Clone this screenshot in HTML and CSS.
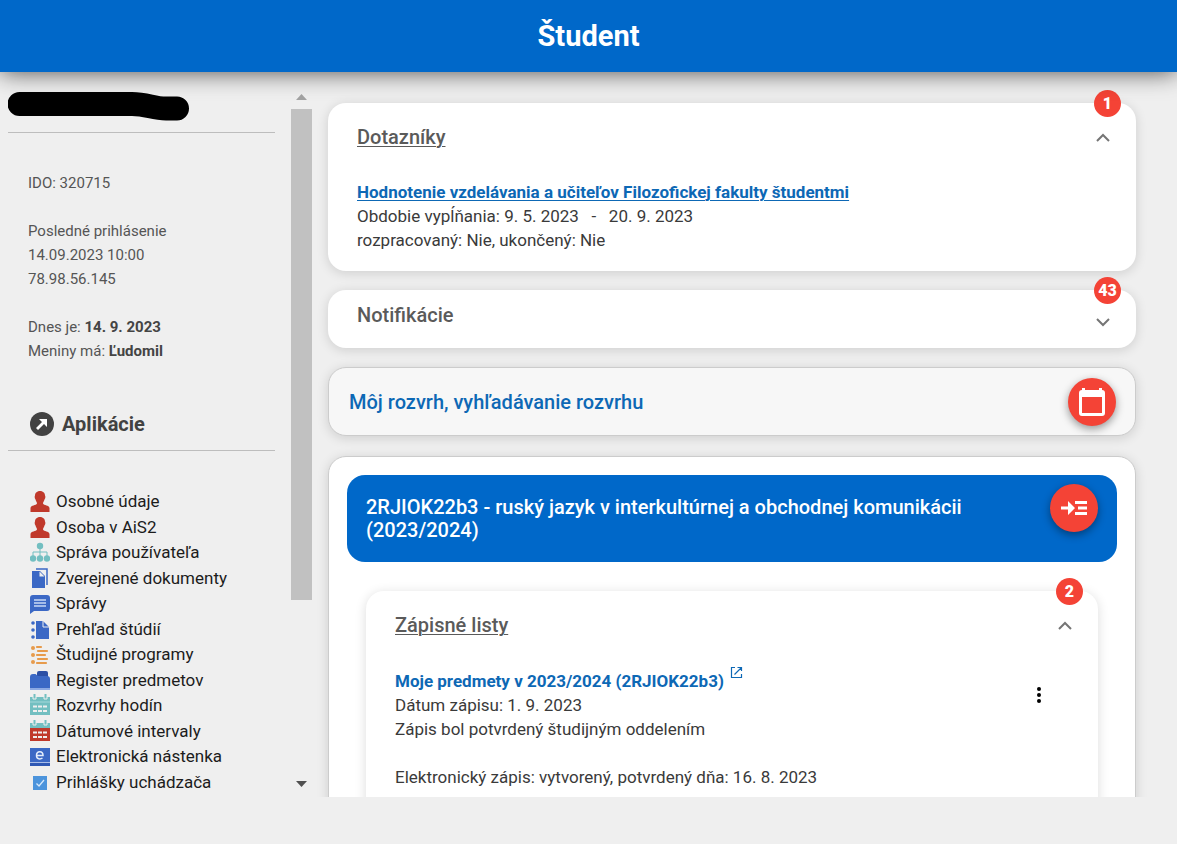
FILE: index.html
```html
<!DOCTYPE html>
<html lang="sk">
<head>
<meta charset="utf-8">
<meta name="viewport" content="width=device-width, initial-scale=1">
<title>Študent</title>
<link rel="stylesheet" href="styles.css">
</head>
<body class="page">
<header class="topbar"><h1 class="topbar-title">Študent</h1></header>
<div class="layout">
  <aside class="sidebar">
    <div class="sidebar-content">
      <div class="user">
        <svg class="user-mask" viewBox="0 0 184 32" aria-hidden="true"><path d="M11.500 13H124C139 13 145 17.500 158 17.500H169" fill="none" stroke="#000" stroke-width="24" stroke-linecap="round"/></svg>
      </div>
      <div class="info">
        <p>IDO: 320715</p>
        <p>Posledné prihlásenie<br>14.09.2023 10:00<br>78.98.56.145</p>
        <p>Dnes je: <strong>14. 9. 2023</strong><br>Meniny má: <strong>Ľudomil</strong></p>
      </div>
      <h2 class="apps-title">
        <svg class="apps-icon" viewBox="0 0 24 24" aria-hidden="true"><circle cx="12" cy="12" r="12" fill="#424242"/><path d="M9 7h8v8l-3-3-6 6-2-2 6-6z" fill="#fff"/></svg>
        Aplikácie
      </h2>
      <nav class="apps" aria-label="Aplikácie">
        <a class="app" href="#"><svg class="app-icon" viewBox="0 0 20 22"><path id="person" d="M5 5.500C5-.5 15-.5 15 5.500q1 2-.5 4c-.5 2-1.500 2.500-1.500 4 1 2 6 1.500 6.500 4.500v4H.5v-4C1 15 6 15.500 7 13.500c0-1.500-1-2-1.500-4-1.500-2-.5-4-.5-4z" fill="#c0392b"/></svg>Osobné údaje</a>
        <a class="app" href="#"><svg class="app-icon" viewBox="0 0 20 22"><use href="#person"/></svg>Osoba v AiS2</a>
        <a class="app" href="#"><svg class="app-icon" viewBox="0 0 20 22"><path d="M3 15V11H17v4M10 7v8" fill="none" stroke="#73bfc1"/><g fill="#73bfc1"><circle cx="10" cy="5" r="3.200"/><circle cx="3" cy="17.500" r="3.200"/><circle cx="10" cy="17.500" r="3.200"/><circle cx="17" cy="17.500" r="3.200"/></g></svg>Správa používateľa</a>
        <a class="app" href="#"><svg class="app-icon" viewBox="0 0 20 22"><path d="M6 2h11v16" fill="none" stroke="#3b68c5" stroke-width="1.500"/><path d="M2 4h8l5 5v12H2z" fill="#3b68c5"/><path d="M9.500 4.500v5h5z" fill="#eee"/></svg>Zverejnené dokumenty</a>
        <a class="app" href="#"><svg class="app-icon" viewBox="0 0 20 22"><path d="M3 3h14q3 0 3 3v10q0 3-3 3H4l-4 3V6q0-3 3-3z" fill="#3b68c5"/><path d="M4 8h12M4 11h12M4 14h12" stroke="#c9d9f5" stroke-width="1.600"/></svg>Správy</a>
        <a class="app" href="#"><svg class="app-icon" viewBox="0 0 20 22"><path d="M6 3h7l6 6v12H6z" fill="#3b68c5"/><path d="M13 3v6h6" fill="none" stroke="#efefef"/><g fill="#3b68c5"><circle cx="3" cy="5" r="1.800"/><circle cx="3" cy="12" r="1.800"/><circle cx="3" cy="19" r="1.800"/></g></svg>Prehľad štúdií</a>
        <a class="app" href="#"><svg class="app-icon" viewBox="0 0 20 22"><path d="M7 4h4M8 8h9M7 12h8M8 16h9M7 20h9" stroke="#e79b4c" stroke-width="2.200" stroke-linecap="round"/><g fill="#e79b4c"><circle cx="3" cy="5" r="2"/><circle cx="3" cy="12" r="2"/><circle cx="3" cy="19" r="2"/></g></svg>Študijné programy</a>
        <a class="app" href="#"><svg class="app-icon" viewBox="0 0 20 22"><path d="M7 7V4q0-2 2-2h7q2 0 2 2v4H7z" fill="#2b4fa5"/><path d="M0 19V8q0-3 3-3h2.500L8 7h9q3 0 3 3v9z" fill="#3b68c5"/><path d="M0 20h20" stroke="#8da9e3" stroke-width="2"/></svg>Register predmetov</a>
        <a class="app" href="#"><svg class="app-icon" viewBox="0 0 20 22"><path d="M0 3h20v18H0z" fill="#73bfc1"/><path d="M3 0v5h3V0M14 0v5h3V0" fill="#73bfc1" stroke="#efefef"/><path d="M0 8h20" stroke="#a5d8da"/><path d="M3 12.500h14M3 17h14" stroke="#efefef" stroke-width="2" stroke-dasharray="4 1"/></svg>Rozvrhy hodín</a>
        <a class="app" href="#"><svg class="app-icon" viewBox="0 0 20 22"><path d="M0 3h20v5H0z" fill="#73bfc1"/><path d="M0 8h20v13H0z" fill="#c0392b"/><path d="M3 0v5h3V0M14 0v5h3V0" fill="#73bfc1" stroke="#efefef"/><path d="M3 12.500h14M3 17h14" stroke="#efefef" stroke-width="2" stroke-dasharray="4 1"/></svg>Dátumové intervaly</a>
        <a class="app" href="#"><svg class="app-icon" viewBox="0 0 20 22"><path d="M0 3h20v14H0z" fill="#3b68c5"/><path d="M0 18h20v3H0z" fill="#2f58b4"/><path d="M0 17.500h20" stroke="#a9bde8"/><path d="M7 10.500h6c0-5-6.500-5-6.500 0 0 4 4 4 6 2.500" fill="none" stroke="#e5edfb" stroke-width="1.500"/></svg>Elektronická nástenka</a>
        <a class="app" href="#"><svg class="app-icon" viewBox="0 0 20 22"><path d="M3 5h14v14H3z" fill="#4c94dc"/><path d="M6.500 12.500l2.500 2.500 5-6" fill="none" stroke="#d5e8fb" stroke-width="1.300"/></svg>Prihlášky uchádzača</a>
      </nav>
    </div>
    <div class="scrollbar" aria-hidden="true">
      <svg class="scroll-arrow" viewBox="0 0 21 21"><path d="M5 13h11l-5.500-6z" fill="#a3a3a3"/></svg>
      <div class="scroll-track"><div class="scroll-thumb"></div></div>
      <svg class="scroll-arrow" viewBox="0 0 21 21"><path d="M5 8h11l-5.500 6z" fill="#505050"/></svg>
    </div>
  </aside>
  <main class="content">
    <section class="card">
      <span class="badge">1</span>
      <div class="card-head">
        <h2 class="card-title open">Dotazníky</h2>
        <button class="icon-button" aria-label="Zbaliť dotazníky"><svg viewBox="0 0 22 22"><path class="chevron" d="M5 15l6-6 6 6"/></svg></button>
      </div>
      <div class="card-body">
        <a class="strong-link underlined" href="#">Hodnotenie vzdelávania a učiteľov Filozofickej fakulty študentmi</a>
        <p>Obdobie vypĺňania: 9. 5. 2023 &nbsp; - &nbsp; 20. 9. 2023</p>
        <p>rozpracovaný: Nie, ukončený: Nie</p>
      </div>
    </section>
    <section class="card collapsed">
      <span class="badge">43</span>
      <div class="card-head">
        <h2 class="card-title">Notifikácie</h2>
        <button class="icon-button" aria-label="Rozbaliť notifikácie"><svg viewBox="0 0 22 22"><path class="chevron" d="M5 8l6 6 6-6"/></svg></button>
      </div>
    </section>
    <section class="schedule">
      <a class="schedule-link" href="#">Môj rozvrh, vyhľadávanie rozvrhu</a>
      <button class="fab" aria-label="Rozvrh"><svg class="fab-calendar" viewBox="0 0 26 28"><path d="M3 0h3v2h14V0h3v2q3 0 3 3v20q0 3-3 3H3q-3 0-3-3V5q0-3 3-3zM3 9v16h20V9z" fill="#fff" fill-rule="evenodd"/></svg></button>
    </section>
    <section class="study">
      <div class="study-head">
        <h2 class="study-title">2RJIOK22b3 - ruský jazyk v interkultúrnej a obchodnej komunikácii (2023/2024)</h2>
        <button class="fab" aria-label="Detail štúdia"><svg class="fab-enter" viewBox="0 0 26 14"><path d="M0 5.500h7V0l7 7-7 7V8.500H0zM14 0h12v3H14zM17 5.500h9v3h-9zM14 11h12v3H14z" fill="#fff"/></svg></button>
      </div>
      <section class="card nested">
        <span class="badge">2</span>
        <div class="card-head">
          <h3 class="card-title open">Zápisné listy</h3>
          <button class="icon-button" aria-label="Zbaliť zápisné listy"><svg viewBox="0 0 22 22"><path class="chevron" d="M5 15l6-6 6 6"/></svg></button>
        </div>
        <div class="card-body enrolment">
          <div>
            <a class="strong-link with-icon" href="#">Moje predmety v 2023/2024 (2RJIOK22b3)
              <svg class="external" viewBox="0 0 13 13" aria-hidden="true"><path d="M5 1.500H1.500v10h10V8M7.500 1.500h4V5M11.500 1.500l-7 7" fill="none" stroke="#0d68b5" stroke-width="1.200"/></svg></a>
            <p>Dátum zápisu: 1. 9. 2023</p>
            <p>Zápis bol potvrdený študijným oddelením</p>
            <p class="spaced">Elektronický zápis: vytvorený, potvrdený dňa: 16. 8. 2023</p>
          </div>
          <button class="icon-button kebab" aria-label="Možnosti"><svg viewBox="0 0 22 22"><circle cx="11" cy="5" r="2"/><circle cx="11" cy="11" r="2"/><circle cx="11" cy="17" r="2"/></svg></button>
        </div>
      </section>
    </section>
  </main>
</div>
</body>
</html>
```

FILE: styles.css
```css
* { box-sizing: border-box; }
.page {
  margin: 0;
  height: 100vh;
  display: flex;
  flex-direction: column;
  padding-bottom: 47px;
  background: #efefef;
  color: #333;
  font: 16px/24px Roboto, "Noto Sans", sans-serif;
  overflow: hidden;
}
h1, h2, h3, p { margin: 0; }
a { text-decoration: none; color: inherit; }
button { border: 0; padding: 0; cursor: pointer; font: inherit; }
svg { display: block; }

.topbar {
  flex: none;
  display: flex;
  align-items: center;
  justify-content: center;
  height: 72px;
  background: #0068c9;
  box-shadow: 0 0 24px rgba(0, 0, 0, .7);
  position: relative;
  z-index: 1;
}
.topbar-title { font-size: 29px; line-height: 36px; font-weight: 700; color: #fff; }

.layout { flex: 1; min-height: 0; display: flex; overflow: hidden; }

.sidebar { flex: none; display: flex; justify-content: space-between; width: 312px; padding: 15px 0 3px 8px; }
.sidebar-content { width: 267px; display: flex; flex-direction: column; }
.user { padding: 4px 0 9px; border-bottom: 1px solid #bdbdbd; }
.user-mask { width: 184px; height: 32px; }
.info { display: grid; gap: 24px; padding: 38px 20px 46px; font-size: 15px; color: #555; }
.info strong { color: #444; }
.apps-title {
  display: flex;
  align-items: center;
  gap: 8px;
  padding: 3px 22px 14px;
  border-bottom: 1px solid #bdbdbd;
  font-size: 20px;
  line-height: 24px;
  font-weight: 700;
  color: #424242;
}
.apps-icon { width: 24px; height: 24px; }
.apps { flex: 1; display: flex; flex-direction: column; justify-content: space-between; padding: 38px 0 0 22px; }
.app { display: flex; align-items: center; gap: 6px; font-size: 17px; color: #1c1c1c; }
.app-icon { width: 20px; height: 22px; }

.scrollbar { width: 21px; display: flex; flex-direction: column; }
.scroll-arrow { width: 21px; height: 21px; }
.scroll-track { flex: 1; padding-top: 1px; }
.scroll-thumb { height: 74%; background: #c1c1c1; }

.content { flex: 1; min-width: 0; display: flex; flex-direction: column; gap: 19px; padding: 31px 41px 0 16px; }
.card {
  position: relative;
  padding: 22px 22px 19px 29px;
  border-radius: 18px;
  background: #fff;
  box-shadow: 0 2px 12px rgba(0, 0, 0, .14);
}
.badge {
  position: absolute;
  top: -13px;
  right: 15px;
  width: 27px;
  height: 27px;
  border-radius: 50%;
  background: #f44336;
  color: #fff;
  font-size: 16px;
  line-height: 27px;
  font-weight: 900;
  text-align: center;
}
.card-head { display: flex; align-items: center; justify-content: space-between; }
.card-title { font-size: 20px; line-height: 24px; font-weight: 500; color: #5a5a5a; }
.open { text-decoration: underline; text-decoration-thickness: 1px; text-underline-offset: 2px; }
.icon-button { flex: none; width: 22px; height: 22px; background: none; }
.chevron { fill: none; stroke: #757575; stroke-width: 2; }
.collapsed { padding-top: 13px; padding-bottom: 15px; }
.collapsed .card-head { align-items: flex-start; }
.collapsed .icon-button { margin-top: 8px; }
.card-body { margin-top: 31px; font-size: 17px; color: #3a3a3a; }
.strong-link { display: block; font-weight: 700; font-size: 17px; color: #0d68b5; }
.underlined { text-decoration: underline; text-decoration-thickness: 1px; text-underline-offset: 2px; }

.schedule {
  display: flex;
  align-items: center;
  justify-content: space-between;
  padding: 10px 19px 9px 20px;
  border: 1px solid #ccc;
  border-radius: 18px;
  background: #f7f7f7;
  box-shadow: 0 2px 12px rgba(0, 0, 0, .14);
}
.schedule-link { font-size: 20px; font-weight: 500; color: #0d68b5; }
.fab {
  flex: none;
  display: flex;
  align-items: center;
  justify-content: center;
  width: 48px;
  height: 48px;
  border-radius: 50%;
  background: #f44336;
  box-shadow: 0 3px 8px rgba(0, 0, 0, .4);
}
.fab-calendar { width: 26px; height: 28px; }
.fab-enter { width: 26px; height: 14px; }

.study {
  flex: none;
  margin-top: 1px;
  padding: 18px 18px 48px;
  border: 1px solid #ccc;
  border-radius: 18px;
  background: #fff;
  box-shadow: 0 2px 12px rgba(0, 0, 0, .14);
}
.study-head {
  display: flex;
  align-items: flex-start;
  justify-content: space-between;
  gap: 40px;
  padding: 9px 19px 20px;
  border-radius: 18px;
  background: #0068c9;
}
.study-title { padding-top: 12px; font-size: 20px; line-height: 23px; font-weight: 500; color: #fff; }
.nested { margin: 29px 19px 0; padding-bottom: 48px; }
.enrolment { display: flex; align-items: flex-start; justify-content: space-between; margin-top: 32px; padding-right: 26px; }
.kebab { margin-top: 15px; }
.with-icon { display: flex; gap: 6px; }
.external { width: 13px; height: 13px; margin-top: -3px; }
.spaced { margin-top: 24px; }
```
